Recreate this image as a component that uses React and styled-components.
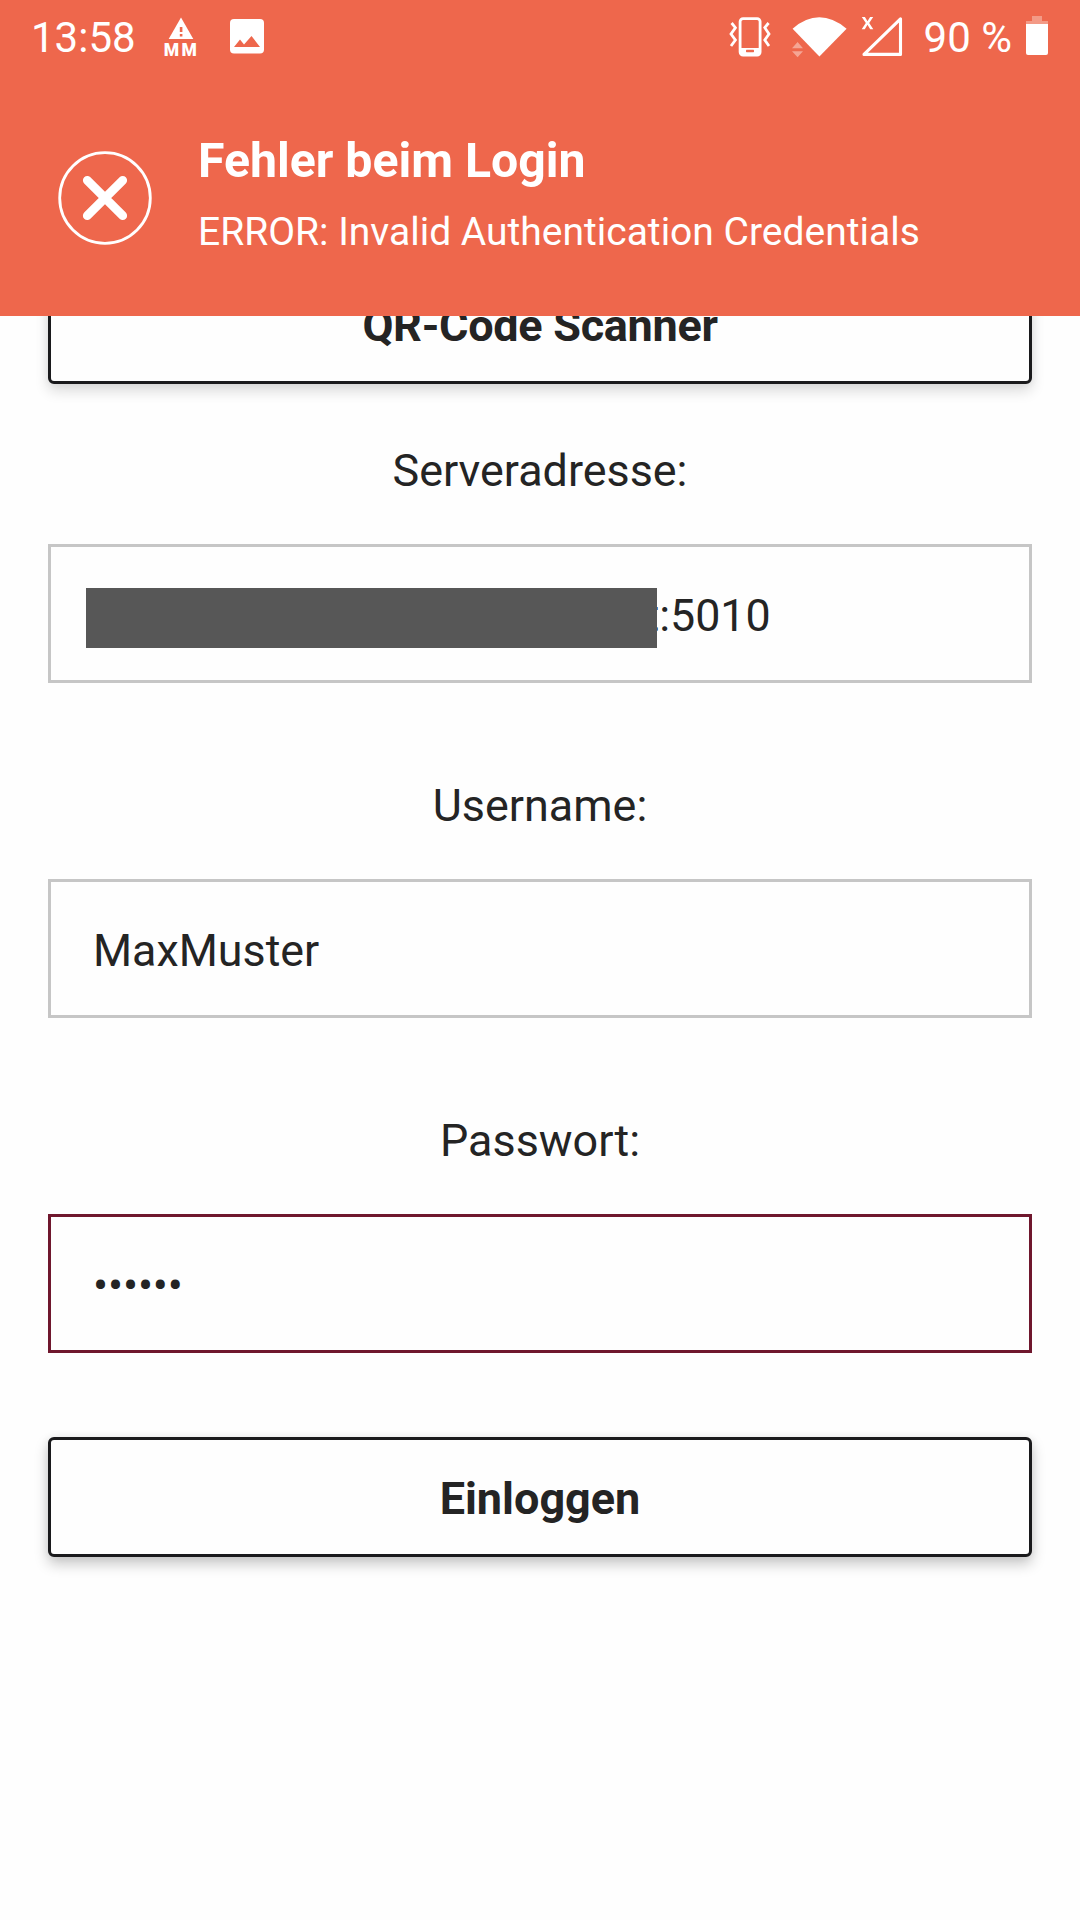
import React from "react";
import styled, { createGlobalStyle } from "styled-components";

const GlobalStyle = createGlobalStyle`
  *, *::before, *::after { box-sizing: border-box; }
  body {
    margin: 0;
    background: #fefefe;
    color: #242424;
    font-family: Roboto, "Liberation Sans", sans-serif;
  }
`;

const Screen = styled.div`
  position: relative;
  width: 1080px;
  height: 1920px;
  overflow: hidden;
  background: #fefefe;
`;

const Banner = styled.header`
  position: absolute;
  inset: 0 0 auto 0;
  z-index: 2;
  height: 316px;
  background: #ee674c;
  color: #fff;
`;

const StatusBar = styled.div`
  display: flex;
  align-items: flex-start;
  justify-content: space-between;
  height: 76px;
  padding: 13px 32px 0 31px;
`;

const StatusGroup = styled.div`
  display: flex;
  align-items: flex-start;
`;

const StatusText = styled.span`
  margin-left: ${(p) => p.$gap || 0}px;
  font-size: 42px;
  line-height: 49px;
  white-space: pre;
`;

const Icon = styled.svg`
  display: block;
  flex: none;
  margin-left: ${(p) => p.$gap || 0}px;
  margin-top: 1px;
`;

const AlertBadge = styled.div`
  display: flex;
  flex-direction: column;
  align-items: center;
  width: 34px;
  margin-left: 28px;
`;

const BadgeText = styled.span`
  margin-top: -2px;
  padding-left: 2px;
  font-size: 17.5px;
  line-height: 20px;
  font-weight: 900;
  letter-spacing: 2.4px;
`;

const Alert = styled.div`
  display: flex;
  align-items: center;
  padding: 58px 0 0 58px;
`;

const AlertBody = styled.div`
  margin-left: 46px;
  padding-bottom: 6px;
`;

const AlertTitle = styled.h1`
  margin: -1px 0 0;
  font-size: 48.2px;
  line-height: 56px;
  font-weight: 700;
`;

const AlertMessage = styled.p`
  margin: 20px 0 0;
  font-size: 39px;
  line-height: 46px;
`;

const Form = styled.main`
  display: flex;
  flex-direction: column;
  padding: 264px 48px 0;
`;

const Button = styled.button`
  height: 120px;
  margin: ${(p) => p.$top || 0}px 0 0;
  padding: 2px 0 0;
  border: 3px solid #1a1a1c;
  border-radius: 6px;
  background: #fefefe;
  box-shadow: 0 7px 14px rgba(0, 0, 0, ${(p) => p.$shade}), 0 0 9px rgba(0, 0, 0, 0.06);
  color: #242424;
  font: 700 45px/53px Roboto, "Liberation Sans", sans-serif;
  letter-spacing: ${(p) => p.$spacing || 0}px;
`;

const Field = styled.div`
  display: flex;
  flex-direction: column;
  margin-top: ${(p) => p.$top}px;
`;

const Label = styled.label`
  margin-bottom: 47px;
  text-align: center;
  font-size: 44.9px;
  line-height: 53px;
`;

const InputBox = styled.div`
  display: flex;
  align-items: center;
  height: 139px;
  padding: 4px 35px 0 ${(p) => (p.$masked ? 35 : 42)}px;
  border: 3px solid ${(p) => (p.$active ? "#6f172d" : "#c6c6c6")};
  font-size: 44.8px;
  line-height: 53px;
  letter-spacing: ${(p) => (p.$active ? "-0.15px" : "0")};
`;

const Mask = styled.span`
  position: relative;
  z-index: 1;
  width: 571px;
  height: 60px;
  margin-top: 4px;
  margin-right: -12.5px;
  background: #575757;
`;

function AlertIcon() {
  return (
    <Icon width="26" height="28" viewBox="0 0 26 28">
      <path d="M13 3.5 25.3 25H.7Z" fill="#fff" />
      <path d="M11.8 13h2.6v5h-2.6zM11.8 20h2.6v2.5h-2.6z" fill="#ee674c" />
    </Icon>
  );
}

function ImageIcon() {
  return (
    <Icon $gap={31} width="36" height="44" viewBox="0 0 36 44">
      <rect x="1" y="5" width="34" height="34.5" rx="4" fill="#fff" />
      <path d="M5 33 11 25.5 15 30.5 22.5 22 31 33Z" fill="#ee674c" />
    </Icon>
  );
}

function VibrateIcon() {
  return (
    <Icon width="42" height="46" viewBox="0 0 42 46">
      <g fill="none" stroke="#fff" strokeWidth="2.8">
        <rect x="11.1" y="4.6" width="20" height="36.5" rx="3" />
        <path d="m2.6 9 3.8 4.7L2 20l4.4 6L2 32M39.6 9l-3.8 4.7L40 20l-4.2 6 4.2 6" />
      </g>
      <path d="M11 34h20v5q0 2.5-3 2.5H14q-3 0-3-2.5Z" fill="#fff" />
      <rect x="17" y="35.7" width="8" height="2.5" rx=".6" fill="#ee674c" />
    </Icon>
  );
}

function WifiIcon() {
  return (
    <Icon $gap={21} width="56" height="46" viewBox="0 0 56 46">
      <path d="M0.6 14.7Q27-8 54.6 14.7L27.4 42.5Z" fill="#fff" />
      <path d="M0 34.2 5.6 28l5.4 6.2ZM0 37.3h11L5.6 43.3Z" fill="#f5a594" />
    </Icon>
  );
}

function SignalIcon() {
  return (
    <Icon $gap={12} width="44" height="46" viewBox="0 0 44 46">
      <path d="M4 40.4 40.5 4.8V40.4Z" fill="none" stroke="#fff" strokeWidth="3.1" strokeLinejoin="round" />
      <path d="M1.8 3h3.1l2.6 4.2L10.1 3h3.1L9.2 9l4.1 6.2h-3.1l-2.7-4.4-2.7 4.4H1.7L5.8 9Z" fill="#fff" />
    </Icon>
  );
}

function BatteryIcon() {
  return (
    <Icon $gap={14} width="22" height="46" viewBox="0 0 22 46">
      <path d="M0 8V7h6V2h10v5h6v3H0Z" fill="#f39a86" />
      <path d="M0 10h22v29q0 2-2 2H2q-2 0-2-2Z" fill="#fff" />
    </Icon>
  );
}

function ErrorIcon() {
  return (
    <svg width="94" height="94" viewBox="0 0 94 94">
      <circle cx="47" cy="47" r="45.3" fill="none" stroke="#fff" strokeWidth="2.8" />
      <path d="m29.3 29.3 35.4 35.4M64.7 29.3 29.3 64.7" stroke="#fff" strokeWidth="8.8" strokeLinecap="round" />
    </svg>
  );
}

export default function App() {
  return (
    <>
      <GlobalStyle />
      <Screen>
        <Form>
          <Button $shade={0.14} $spacing={-0.3}>QR-Code Scanner</Button>
          <Field $top={60}>
            <Label>Serveradresse:</Label>
            <InputBox $masked>
              <Mask />
              <span>t:5010</span>
            </InputBox>
          </Field>
          <Field $top={96}>
            <Label>Username:</Label>
            <InputBox>MaxMuster</InputBox>
          </Field>
          <Field $top={96}>
            <Label>Passwort:</Label>
            <InputBox $active>••••••</InputBox>
          </Field>
          <Button $top={84} $shade={0.22}>Einloggen</Button>
        </Form>
        <Banner>
          <StatusBar>
            <StatusGroup>
              <StatusText>13:58</StatusText>
              <AlertBadge>
                <AlertIcon />
                <BadgeText>MM</BadgeText>
              </AlertBadge>
              <ImageIcon />
            </StatusGroup>
            <StatusGroup>
              <VibrateIcon />
              <WifiIcon />
              <SignalIcon />
              <StatusText $gap={20}>90 %</StatusText>
              <BatteryIcon />
            </StatusGroup>
          </StatusBar>
          <Alert>
            <ErrorIcon />
            <AlertBody>
              <AlertTitle>Fehler beim Login</AlertTitle>
              <AlertMessage>ERROR: Invalid Authentication Credentials</AlertMessage>
            </AlertBody>
          </Alert>
        </Banner>
      </Screen>
    </>
  );
}
